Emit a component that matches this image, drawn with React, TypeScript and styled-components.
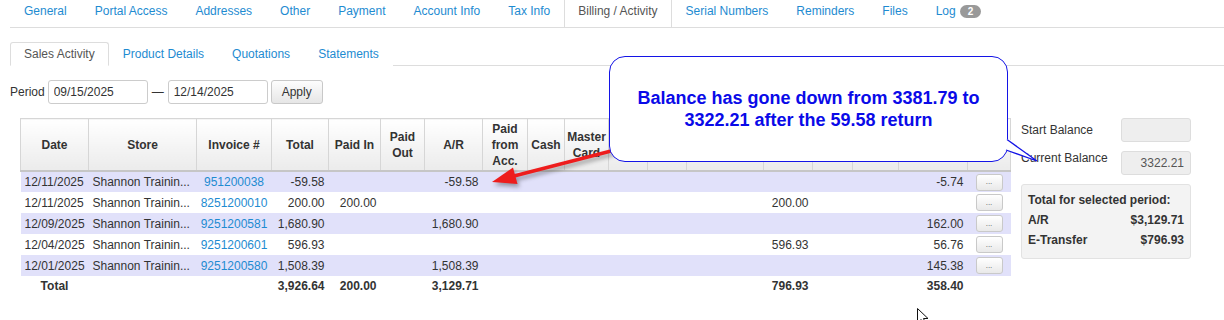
import React from 'react'
import styled, { createGlobalStyle } from 'styled-components'

const GlobalStyle = createGlobalStyle`
  body {
    margin: 0;
    font-family: "Liberation Sans", Arial, sans-serif;
    font-size: 12px;
    color: #333;
    background: #fff;
  }
`

const navTabs = [
  'General',
  'Portal Access',
  'Addresses',
  'Other',
  'Payment',
  'Account Info',
  'Tax Info',
  'Billing / Activity',
  'Serial Numbers',
  'Reminders',
  'Files',
]

const subTabs = ['Sales Activity', 'Product Details', 'Quotations', 'Statements']

type Align = 'left' | 'center' | 'right'

const columns: { key: string; label: string; w: number; align: Align }[] = [
  { key: 'date', label: 'Date', w: 68, align: 'left' },
  { key: 'store', label: 'Store', w: 108, align: 'left' },
  { key: 'invoice', label: 'Invoice #', w: 75, align: 'center' },
  { key: 'total', label: 'Total', w: 57, align: 'right' },
  { key: 'paidIn', label: 'Paid In', w: 52, align: 'right' },
  { key: 'paidOut', label: 'Paid Out', w: 44, align: 'right' },
  { key: 'ar', label: 'A/R', w: 58, align: 'right' },
  { key: 'fromAcc', label: 'Paid from Acc.', w: 45, align: 'right' },
  { key: 'cash', label: 'Cash', w: 37, align: 'right' },
  { key: 'master', label: 'Master Card', w: 44, align: 'right' },
  { key: 'visa', label: 'Visa', w: 39, align: 'right' },
  { key: 'amex', label: 'Amex', w: 39, align: 'right' },
  { key: 'debit', label: 'Debit Card', w: 77, align: 'right' },
  { key: 'etransfer', label: 'E-Transfer', w: 49, align: 'right' },
  { key: 'cheque', label: 'Cheque', w: 40, align: 'right' },
  { key: 'other', label: 'Other', w: 46, align: 'right' },
  { key: 'tax', label: 'Tax', w: 69, align: 'right' },
  { key: 'actions', label: '', w: 43, align: 'center' },
]

type Row = Record<string, string>

const store = 'Shannon Trainin...'

const rows: Row[] = [
  { date: '12/11/2025', store, invoice: '951200038', total: '-59.58', ar: '-59.58', tax: '-5.74' },
  { date: '12/11/2025', store, invoice: '8251200010', total: '200.00', paidIn: '200.00', etransfer: '200.00' },
  { date: '12/09/2025', store, invoice: '9251200581', total: '1,680.90', ar: '1,680.90', tax: '162.00' },
  { date: '12/04/2025', store, invoice: '9251200601', total: '596.93', etransfer: '596.93', tax: '56.76' },
  { date: '12/01/2025', store, invoice: '9251200580', total: '1,508.39', ar: '1,508.39', tax: '145.38' },
]

const totals: Row = {
  date: 'Total',
  total: '3,926.64',
  paidIn: '200.00',
  ar: '3,129.71',
  etransfer: '796.93',
  tax: '358.40',
}

export default function App() {
  return (
    <Page>
      <GlobalStyle />
      <TopNav>
        {navTabs.map((t) => (
          <NavTab key={t} $active={t === 'Billing / Activity'}>
            {t}
          </NavTab>
        ))}
        <NavTab>
          Log<Badge>2</Badge>
        </NavTab>
      </TopNav>

      <SubTabBar>
        {subTabs.map((t, i) => (
          <SubTab key={t} $active={i === 0}>
            {t}
          </SubTab>
        ))}
      </SubTabBar>

      <PeriodRow>
        <span>Period</span>
        <DateInput defaultValue="09/15/2025" />
        <Dash>—</Dash>
        <DateInput defaultValue="12/14/2025" />
        <Button>Apply</Button>
      </PeriodRow>

      <Main>
        <Grid>
          <colgroup>
            {columns.map((c) => (
              <col key={c.key} style={{ width: c.w }} />
            ))}
          </colgroup>
          <thead>
            <tr>
              {columns.map((c) => (
                <Th key={c.key}>{c.label}</Th>
              ))}
            </tr>
          </thead>
          <tbody>
            {rows.map((r, i) => (
              <BodyRow key={i} $striped={i % 2 === 0}>
                {columns.map((c) => {
                  if (c.key === 'invoice') {
                    return (
                      <Td key={c.key} $align="center">
                        <InvoiceLink>{r.invoice}</InvoiceLink>
                      </Td>
                    )
                  }
                  if (c.key === 'actions') {
                    return (
                      <Td key={c.key} $align="center">
                        <DotsButton>...</DotsButton>
                      </Td>
                    )
                  }
                  return (
                    <Td key={c.key} $align={c.align}>
                      {r[c.key] || ''}
                    </Td>
                  )
                })}
              </BodyRow>
            ))}
            <TotalRow>
              {columns.map((c) => (
                <Td key={c.key} $align={c.key === 'date' ? 'center' : c.align}>
                  {totals[c.key] || ''}
                </Td>
              ))}
            </TotalRow>
          </tbody>
        </Grid>

        <Side>
          <SideRow>
            <SideLabel>Start Balance</SideLabel>
            <SideValue />
          </SideRow>
          <SideRow>
            <SideLabel $lift>Current Balance</SideLabel>
            <SideValue>3322.21</SideValue>
          </SideRow>
          <TotalsBox>
            <TotalsLine>Total for selected period:</TotalsLine>
            <TotalsLine>
              <span>A/R</span>
              <span>$3,129.71</span>
            </TotalsLine>
            <TotalsLine>
              <span>E-Transfer</span>
              <span>$796.93</span>
            </TotalsLine>
          </TotalsBox>
        </Side>
      </Main>

      <Arrow width="140" height="55" viewBox="0 0 140 55">
        <line x1="34" y1="36" x2="135" y2="10" stroke="#ee1d1d" strokeWidth="3.5" />
        <polygon points="12,42 37.5,44 33,27.5" fill="#ee1d1d" />
      </Arrow>

      <Callout>
        Balance has gone down from 3381.79 to
        <br />
        3322.21 after the 59.58 return
      </Callout>
      <CalloutTail width="45" height="40" viewBox="0 0 45 40">
        <polygon points="2,9 9,9 37,31 9,21 2,21" fill="#fff" />
        <polyline points="7,9.5 37,31 6,20" fill="none" stroke="#1414e6" strokeWidth="1.3" />
      </CalloutTail>

      <Cursor width="16" height="22" viewBox="0 0 16 22">
        <path
          d="M1.5 1.5 L1.5 16 L5 12.5 L7.5 18.5 L10 17.5 L7.5 11.5 L12 11.5 Z"
          fill="#fff"
          stroke="#111"
          strokeWidth="1"
        />
      </Cursor>
    </Page>
  )
}

const Page = styled.div`
  position: relative;
  padding-left: 10px;
  min-height: 320px;
`

const TopNav = styled.div`
  display: flex;
  height: 27px;
  border-bottom: 1px solid #ddd;
`

const NavTab = styled.div<{ $active?: boolean }>`
  display: flex;
  align-items: flex-start;
  padding: 0 ${(p) => (p.$active ? 13 : 14)}px;
  line-height: 22px;
  color: ${(p) => (p.$active ? '#555' : '#1e8bd1')};
  border-left: ${(p) => (p.$active ? '1px solid #ddd' : 'none')};
  border-right: ${(p) => (p.$active ? '1px solid #ddd' : 'none')};
  white-space: nowrap;
`

const Badge = styled.span`
  display: inline-block;
  margin: 5px 0 0 4px;
  height: 13px;
  padding: 0 8px;
  border-radius: 7px;
  background: #999;
  color: #fff;
  font-size: 10px;
  font-weight: bold;
  line-height: 13px;
`

const SubTabBar = styled.div`
  display: flex;
  margin-top: 14px;
  border-bottom: 1px solid #ddd;
`

const SubTab = styled.div<{ $active?: boolean }>`
  box-sizing: border-box;
  height: 24px;
  margin-bottom: -1px;
  padding: 0 13px;
  line-height: 22px;
  border: 1px solid ${(p) => (p.$active ? '#ddd' : 'transparent')};
  border-bottom-color: ${(p) => (p.$active ? '#fff' : 'transparent')};
  border-radius: 3px 3px 0 0;
  background: #fff;
  color: ${(p) => (p.$active ? '#555' : '#1e8bd1')};
`

const PeriodRow = styled.div`
  display: flex;
  align-items: center;
  margin-top: 14px;
  height: 24px;
  gap: 3px;
`

const DateInput = styled.input`
  box-sizing: border-box;
  width: 100px;
  height: 24px;
  padding: 0 5px;
  border: 1px solid #ccc;
  border-radius: 3px;
  font: 12px "Liberation Sans", Arial, sans-serif;
  color: #333;
`

const Dash = styled.span`
  margin: 0 1px;
  color: #333;
`

const Button = styled.button`
  box-sizing: border-box;
  width: 52px;
  height: 24px;
  border: 1px solid #c8c8c8;
  border-radius: 3px;
  background: linear-gradient(#fdfdfd, #e6e6e6);
  font: 12px "Liberation Sans", Arial, sans-serif;
  color: #333;
`

const Main = styled.div`
  display: flex;
  align-items: flex-start;
  margin-top: 14px;
  padding-left: 10px;
`

const Grid = styled.table`
  width: 990px;
  table-layout: fixed;
  border-collapse: collapse;
`

const Th = styled.th`
  height: 51px;
  padding: 0 2px;
  border: 1px solid #d6d6d6;
  border-bottom: 2px solid #c6c6c6;
  background: linear-gradient(#ffffff, #ebebeb);
  font-weight: bold;
  line-height: 16px;
  color: #333;
  text-align: center;
  vertical-align: middle;
`

const BodyRow = styled.tr<{ $striped: boolean }>`
  height: 21px;
  background: ${(p) => (p.$striped ? '#e1e1fa' : '#fff')};
`

const TotalRow = styled.tr`
  height: 20px;
  font-weight: bold;
`

const Td = styled.td<{ $align: Align }>`
  padding: ${(p) => (p.$align === 'left' ? '0 0 0 4px' : '0 4px')};
  text-align: ${(p) => p.$align};
  white-space: nowrap;
  overflow: hidden;
  color: #333;
`

const InvoiceLink = styled.span`
  color: #1e8bd1;
`

const DotsButton = styled.button`
  box-sizing: border-box;
  width: 27px;
  height: 17px;
  padding: 0;
  border: 1px solid #c9c9c9;
  border-radius: 3px;
  background: linear-gradient(#ffffff, #e9e9e9);
  font-size: 8px;
  line-height: 10px;
  color: #555;
  vertical-align: middle;
`

const Side = styled.div`
  width: 170px;
  margin-left: 10px;
`

const SideRow = styled.div`
  display: flex;
  justify-content: space-between;
  height: 24px;
  margin-bottom: 9px;
`

const SideLabel = styled.div<{ $lift?: boolean }>`
  line-height: ${(p) => (p.$lift ? 14 : 24)}px;
  color: #333;
`

const SideValue = styled.div`
  box-sizing: border-box;
  width: 70px;
  height: 24px;
  padding: 0 6px;
  border: 1px solid #ddd;
  border-radius: 3px;
  background: #eee;
  line-height: 22px;
  text-align: right;
  color: #555;
`

const TotalsBox = styled.div`
  padding: 5px 6px 8px;
  border: 1px solid #e2e2e2;
  border-radius: 3px;
  background: #f3f3f3;
`

const TotalsLine = styled.div`
  display: flex;
  justify-content: space-between;
  line-height: 20px;
  font-weight: bold;
  color: #333;
`

const Arrow = styled.svg`
  position: absolute;
  left: 480px;
  top: 140px;
  filter: drop-shadow(2px 3px 2px rgba(0, 0, 0, 0.35));
`

const Callout = styled.div`
  position: absolute;
  left: 609px;
  top: 56px;
  box-sizing: border-box;
  width: 399px;
  height: 106px;
  display: flex;
  align-items: center;
  justify-content: center;
  border: 1.5px solid #1414e6;
  border-radius: 16px;
  background: #fff;
  color: #0a0ae8;
  font: bold 18px/22px "Liberation Sans", Arial, sans-serif;
  text-align: center;
`

const CalloutTail = styled.svg`
  position: absolute;
  left: 1000px;
  top: 130px;
`

const Cursor = styled.svg`
  position: absolute;
  left: 916px;
  top: 307px;
`
